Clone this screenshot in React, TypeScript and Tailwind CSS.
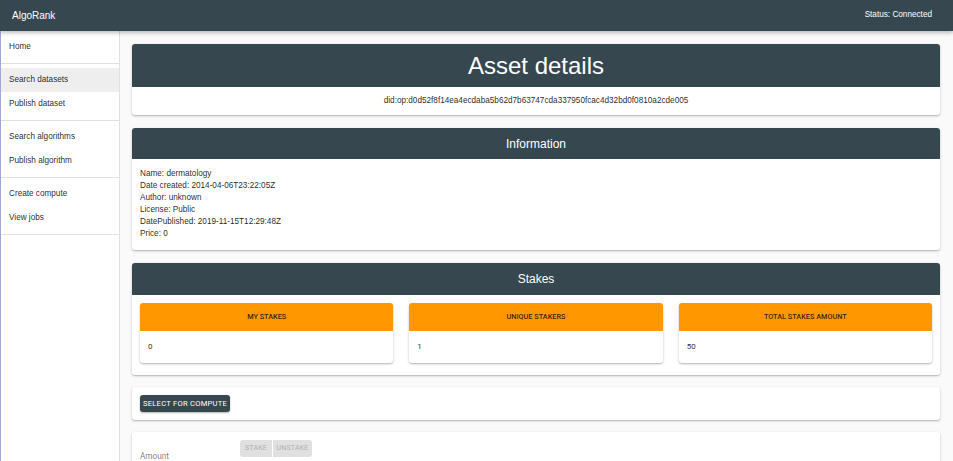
import React from 'react';

const font = { fontFamily: '"Liberation Sans", Arial, sans-serif' };
const roboto = { fontFamily: 'Roboto, "Liberation Sans", sans-serif' };

const navGroups: string[][] = [
  ['Home'],
  ['Search datasets', 'Publish dataset'],
  ['Search algorithms', 'Publish algorithm'],
  ['Create compute', 'View jobs'],
];

const info = [
  'Name: dermatology',
  'Date created: 2014-04-06T23:22:05Z',
  'Author: unknown',
  'License: Public',
  'DatePublished: 2019-11-15T12:29:48Z',
  'Price: 0',
];

const stakes = [
  { label: 'MY STAKES', value: '0' },
  { label: 'UNIQUE STAKERS', value: '1' },
  { label: 'TOTAL STAKES AMOUNT', value: '50' },
];

function Card({ children, className = '' }: { children: React.ReactNode; className?: string }) {
  return (
    <div className={`bg-white rounded-[3px] shadow-[0_1px_3px_rgba(0,0,0,0.2),0_1px_1px_rgba(0,0,0,0.12)] overflow-hidden ${className}`}>
      {children}
    </div>
  );
}

export default function App() {
  return (
    <div className="h-[461px] flex flex-col bg-[#fafafa] overflow-hidden text-[rgba(0,0,0,0.87)]" style={font}>
      <header className="h-[31px] flex-shrink-0 flex items-center justify-between bg-[#37474f] text-white pl-3 pr-[21px] shadow-[0_2px_4px_rgba(0,0,0,0.25)] relative z-10">
        <span className="text-[10px]">AlgoRank</span>
        <span className="text-[8.2px]">Status: Connected</span>
      </header>

      <div className="flex flex-1 min-h-0">
        <aside className="w-[120px] flex-shrink-0 bg-white border-l border-l-[#9fa8da] border-r border-r-[#e0e0e0]">
          {navGroups.map((group, gi) => (
            <div key={gi} className="pt-1 pb-1 border-b border-[#e0e0e0]">
              {group.map((item) => (
                <div
                  key={item}
                  className={`h-6 flex items-center px-2 text-[8.2px] ${item === 'Search datasets' ? 'bg-[#eeeeee]' : ''}`}
                >
                  {item}
                </div>
              ))}
            </div>
          ))}
        </aside>

        <main className="flex-1 min-w-0 pt-[13px] pl-3 pr-[13px] flex flex-col gap-3">
          <Card className="mb-px">
            <div className="h-[43px] bg-[#37474f] text-white flex items-center justify-center text-[24px]">
              Asset details
            </div>
            <div className="h-[28px] flex items-center justify-center text-[8.2px]">
              did:op:d0d52f8f14ea4ecdaba5b62d7b63747cda337950fcac4d32bd0f0810a2cde005
            </div>
          </Card>

          <Card className="mb-px">
            <div className="h-[31px] bg-[#37474f] text-white flex items-center justify-center text-[12px]">
              Information
            </div>
            <div className="px-2 pt-[9px] pb-[10px] text-[8.2px] leading-[12px]">
              {info.map((line) => (
                <div key={line}>{line}</div>
              ))}
            </div>
          </Card>

          <Card>
            <div className="h-[32px] bg-[#37474f] text-white flex items-center justify-center text-[12px]">
              Stakes
            </div>
            <div className="px-2 pt-2 pb-3 grid grid-cols-3 gap-4">
              {stakes.map((s) => (
                <Card key={s.label}>
                  <div className="h-[28px] bg-[#ff9800] flex items-center justify-center text-[7.3px] font-medium text-[rgba(0,0,0,0.8)]" style={roboto}>
                    {s.label}
                  </div>
                  <div className="h-[32px] flex items-center px-2 text-[8px] text-[#333]" style={roboto}>
                    {s.value}
                  </div>
                </Card>
              ))}
            </div>
          </Card>

          <Card>
            <div className="h-[33px] flex items-center px-2">
              <button
                type="button"
                className="h-[17px] w-[90px] flex items-center justify-center rounded-[3px] bg-[#37474f] text-white text-[7.6px] tracking-[0.25px] shadow-[0_1px_2px_rgba(0,0,0,0.3)]"
                style={roboto}
              >
                SELECT FOR COMPUTE
              </button>
            </div>
          </Card>

          <Card className="flex-1 rounded-b-none">
            <div className="flex items-start px-2 pt-2">
              <span className="w-[100px] pt-[10px] text-[8.2px] text-[rgba(0,0,0,0.54)]" style={roboto}>
                Amount
              </span>
              <div className="flex gap-px">
                <span className="h-[17px] w-[32px] flex items-center justify-center bg-[#e0e0e0] rounded-l-[3px] text-[7px] text-[#b0b0b0] tracking-[0.2px]" style={roboto}>
                  STAKE
                </span>
                <span className="h-[17px] w-[39px] flex items-center justify-center bg-[#e0e0e0] rounded-r-[3px] text-[7px] text-[#b0b0b0] tracking-[0.2px]" style={roboto}>
                  UNSTAKE
                </span>
              </div>
            </div>
          </Card>
        </main>
      </div>
    </div>
  );
}
